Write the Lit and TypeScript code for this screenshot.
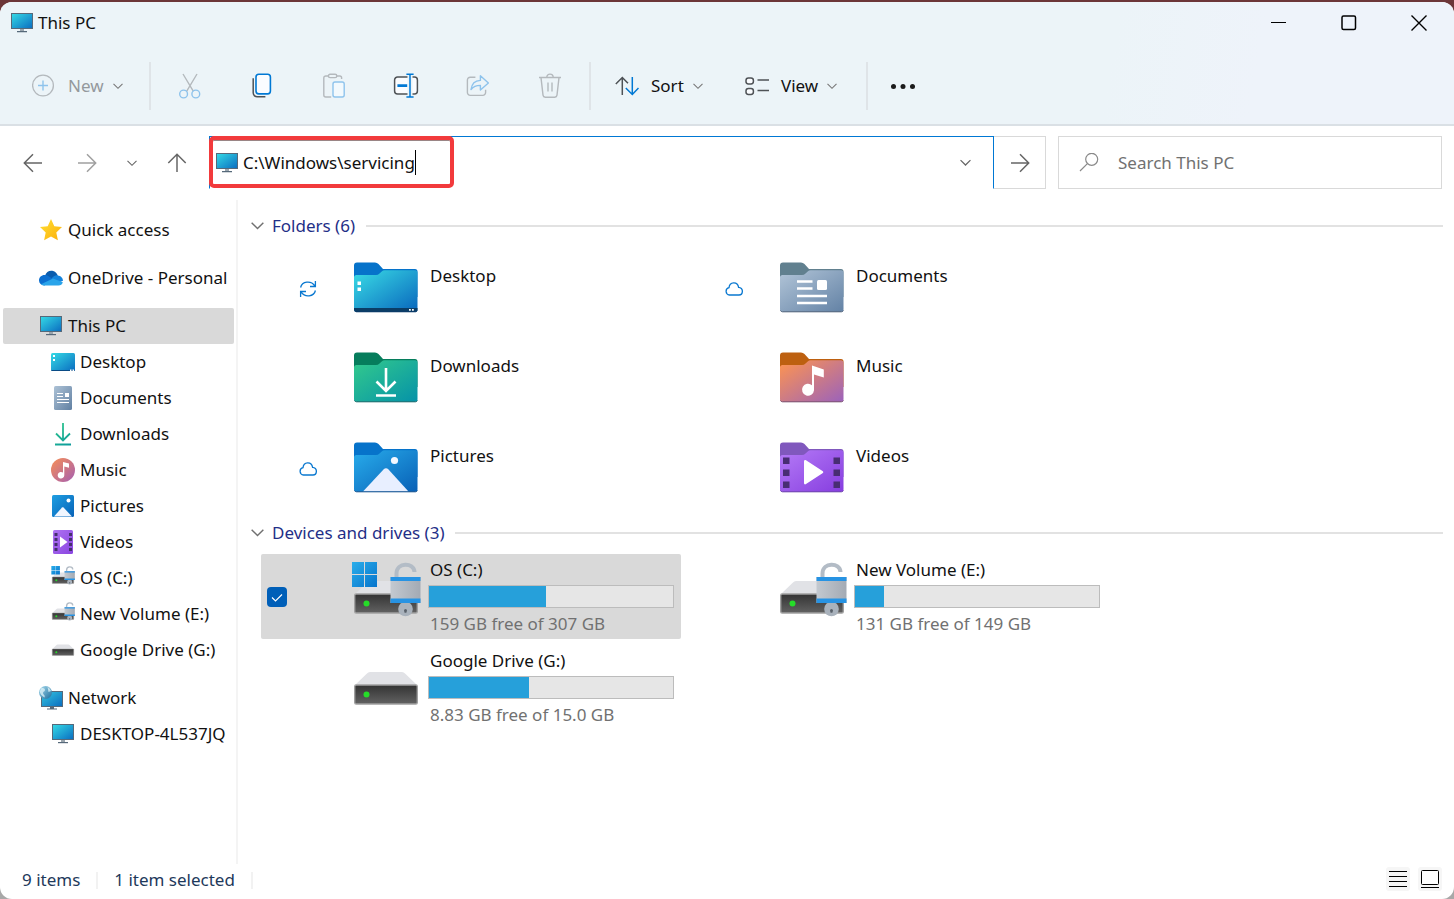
import { LitElement, html, css, svg, nothing, TemplateResult } from "lit";
import { customElement, property, state } from "lit/decorators.js";
import { classMap } from "lit/directives/class-map.js";

type Icon = TemplateResult;

const chevron = (w = 10) => html`<svg width=${w} height=${w} viewBox="0 0 10 10" fill="none" stroke="currentColor" stroke-width="1.1"><path d="M.5 2.8 5 7.3l4.5-4.5" /></svg>`;

/* ---- toolbar glyphs ---- */
const plusIcon = html`<svg width="24" height="24" viewBox="0 0 24 24" fill="none"><circle cx="11" cy="11.500" r="10.4" stroke="#b4b9bd" stroke-width="1.3" /><path d="M11 6.500v10M6 11.500h10" stroke="#8ec3ec" stroke-width="1.4" /></svg>`;
const cutIcon = html`<svg width="24" height="26" viewBox="0 0 24 26" fill="none" stroke-width="1.4"><path d="M5 1l10.4 17.4M19 1 8.6 18.4" stroke="#b4b9bd" /><circle cx="5.6" cy="21" r="3.9" stroke="#8ec3ec" /><circle cx="17.8" cy="21" r="3.9" stroke="#8ec3ec" /></svg>`;
const copyIcon = html`<svg width="24" height="26" viewBox="0 0 24 26" fill="none"><path d="M3.2 5.2v14.6a4 4 0 0 0 4 4h8.2" stroke="#4e5256" stroke-width="1.5" /><rect x="6" y="1.3" width="14.4" height="19.6" rx="2.8" stroke="#0078d4" stroke-width="1.6" fill="#fafcff" /></svg>`;
const pasteIcon = html`<svg width="24" height="26" viewBox="0 0 24 26" fill="none" stroke-width="1.4"><path d="M6.4 3H3.8a2 2 0 0 0-2 2v17a2 2 0 0 0 2 2h5.4M14.6 3h3.2a1.8 1.8 0 0 1 1.8 1.8V6" stroke="#b4b9bd" /><rect x="6.4" y="1.2" width="8.4" height="3.4" rx="1.7" stroke="#b4b9bd" /><rect x="11" y="9" width="11.2" height="15" rx="2" stroke="#8ec3ec" fill="#f2f9fd" /></svg>`;
const renameIcon = html`<svg width="26" height="26" viewBox="0 0 26 26" fill="none"><path d="M14.5 4H4.6a3 3 0 0 0-3 3v11a3 3 0 0 0 3 3h9.9M19.5 4h1.9a3 3 0 0 1 3 3v11a3 3 0 0 1-3 3h-1.9" stroke="#4e5256" stroke-width="1.5" fill="#fafcff" /><path d="M4.4 12.6h9.8" stroke="#0078d4" stroke-width="2.6" /><path d="M17 1.5v22M13.4 1.2h7.2M13.4 24h7.2" stroke="#0078d4" stroke-width="1.5" /></svg>`;
const shareIcon = html`<svg width="24" height="24" viewBox="0 0 24 24" fill="none" stroke-width="1.4" stroke-linejoin="round"><path d="M9.4 3.2H4.2a2.8 2.8 0 0 0-2.8 2.8v12.6a2.8 2.8 0 0 0 2.8 2.8h12.6a2.8 2.8 0 0 0 2.8-2.8v-2.8" stroke="#b4b9bd" /><path d="M14.4 1.8v4.6C9.2 6.6 5.8 9.2 5 15.6c2.400-3.200 5.200-4.200 9.400-4.200V16l8-7.100z" stroke="#8ec3ec" /></svg>`;
const trashIcon = html`<svg width="24" height="26" viewBox="0 0 24 26" fill="none" stroke="#b4b9bd" stroke-width="1.4"><path d="M1 4.500h22M8.800 4.300a3.200 3.200 0 0 1 6.400 0M3 4.700l2 17.500a2.300 2.300 0 0 0 2.300 2h9.400a2.300 2.300 0 0 0 2.300-2l2-17.500M10 9.500v9M14 9.500v9" /></svg>`;
const sortIcon = html`<svg width="24" height="20" viewBox="0 0 24 20" fill="none" stroke-width="1.500"><path d="M7.300 19V1.500M.8 8l6.500-6.500L13 7.300" stroke="#4e5256" /><path d="M17.300 1v17.500M10.800 12l6.500 6.500L23.500 12" stroke="#0078d4" /></svg>`;
const viewIcon = html`<svg width="24" height="20" viewBox="0 0 24 20" fill="#fafcff" stroke="#4e5256" stroke-width="1.500"><rect x="1" y="2" width="7.400" height="6" rx="2.400" /><rect x="1" y="12.500" width="7.400" height="6" rx="2.400" /><path d="M12.500 4H24M12.500 14.500H24" /></svg>`;
const moreIcon = html`<svg width="26" height="6" viewBox="0 0 26 6" fill="#1b1b1b"><circle cx="3.500" cy="3.500" r="2.500" /><circle cx="13" cy="3.500" r="2.500" /><circle cx="22.500" cy="3.500" r="2.500" /></svg>`;

/* ---- navigation glyphs ---- */
const arrow = (rotation: number) => html`<svg width="20" height="20" viewBox="0 0 20 20" fill="none" stroke="currentColor" stroke-width="1.500"><g transform="rotate(${rotation} 10 10)"><path d="M19 10H1.500M10 1.300 1.300 10l8.700 8.700" /></g></svg>`;
const searchIcon = html`<svg width="20" height="20" viewBox="0 0 20 20" fill="none" stroke="#8a8a8a" stroke-width="1.200"><circle cx="12.700" cy="6.300" r="6" /><path d="M8.400 10.600 1 18" /></svg>`;

/* ---- shared colour ramps ---- */
const ramp = (id: string, from: string, to: string) => svg`<linearGradient id=${id} x1="0" y1="0" x2="1" y2="1"><stop offset="0" stop-color=${from} /><stop offset="1" stop-color=${to} /></linearGradient>`;

/* ---- places ---- */
const pcIcon = html`<svg width="24" height="24" viewBox="0 0 24 24"><defs>${ramp("pc", "#35dbe6", "#0a6cc0")}</defs><rect x="1.500" y="2.500" width="21" height="15" fill="url(#pc)" stroke="#56697a" /><path d="M10 18h4v2h-4z" fill="#9aa5ae" /><path d="M7 20h10v1.200H7z" fill="#56697a" /></svg>`;
const starIcon = html`<svg width="24" height="24" viewBox="0 0 24 24"><defs>${ramp("st", "#ffe034", "#fcae0a")}</defs><path d="m12 1 3.300 7.200 7.700.9-5.700 5.300 1.600 7.900-6.900-3.900-6.900 3.900 1.600-7.900L1 9.100l7.700-.9z" fill="url(#st)" /></svg>`;
const oneDriveIcon = html`<svg width="24" height="24" viewBox="0 0 24 24"><path d="M6 10c1-4.500 5-6 8.200-5 2.600.8 4 2.700 4.600 5L12 15z" fill="#0a5cad" /><path d="M5.500 19.500A5.200 5.200 0 0 1 0 14.200C0 11 3 8.500 6.200 9c2.300.2 4 1.600 8 4z" fill="#0c6fd0" /><path d="M12.500 12.500c2.500-3 4.500-3.400 6.300-3 3 .3 5.200 2.600 5.200 5.300l-5 2z" fill="#1483dc" /><path d="M2 18.200 14 12.600l9.800 3.600a4.600 4.600 0 0 1-4.300 3.300H5.500A5 5 0 0 1 2 18.200z" fill="#2aa4ea" /></svg>`;
const desktopIcon = html`<svg width="24" height="24" viewBox="0 0 24 24"><defs>${ramp("dt", "#35dbe6", "#0a6cc0")}</defs><rect y="3" width="24" height="18" rx="1.500" fill="url(#dt)" /><path d="M0 20h24a1.500 1.500 0 0 1-1.500 1H1.500A1.500 1.500 0 0 1 0 20z" fill="#0a4b85" /><path d="M2 5h2v2H2zM2 9h2v2H2zM19 19.500h1.500V21H19zM21.500 19.500H23V21h-1.500z" fill="#fff" /></svg>`;
const documentIcon = html`<svg width="24" height="24" viewBox="0 0 24 24"><defs>${ramp("dc", "#adc2d6", "#6180a2")}</defs><rect x="3" width="18" height="24" rx="1.500" fill="url(#dc)" /><path d="M6 7.500h6M6 10.500h6M6 13.500h12M6 16.500h12" stroke="#fff" stroke-width="1.200" /><path d="M14 7h4v4h-4z" fill="#fff" /></svg>`;
const downloadIcon = html`<svg width="24" height="24" viewBox="0 0 24 24" fill="none"><defs><linearGradient id="dl" gradientUnits="userSpaceOnUse" x1="4" y1="1" x2="20" y2="23"><stop stop-color="#32c98c" /><stop offset="1" stop-color="#0b9a9c" /></linearGradient></defs><path d="M12 1v17M5 11.500l7 7 7-7M4 22.500h16" stroke="url(#dl)" stroke-width="1.800" /></svg>`;
const note = svg`<path d="M12 4v10.600a3.300 3.300 0 1 0 1.300 2.700V8.500l4.700 1.200V5.500z" fill="#fff" />`;
const musicIcon = html`<svg width="24" height="24" viewBox="0 0 24 24"><defs>${ramp("mu", "#f88f55", "#a55fb2")}</defs><circle cx="12" cy="12" r="12" fill="url(#mu)" />${note}</svg>`;
const pictureIcon = html`<svg width="24" height="24" viewBox="0 0 24 24"><defs>${ramp("pi", "#1f9fe2", "#0762b7")}</defs><rect x="1" y="1" width="22" height="22" rx="1.500" fill="url(#pi)" /><path d="m3 22.500 8-9c.5-.5 1-.5 1.500 0l8.500 9z" fill="#f1f6ff" /><circle cx="17.500" cy="6.500" r="2" fill="#fff" /></svg>`;
const videoIcon = html`<svg width="24" height="24" viewBox="0 0 24 24"><defs>${ramp("vi", "#ae72f2", "#8a45e0")}</defs><rect x="2" width="20" height="24" rx="1.500" fill="url(#vi)" /><path d="M3.500 3h3v3h-3zM3.500 8h3v3h-3zM3.500 13h3v3h-3zM3.500 18h3v3h-3zM18 3h3v3h-3zM18 8h3v3h-3zM18 13h3v3h-3zM18 18h3v3h-3z" fill="#45306e" /><path d="M9 6.500v11l7.500-5.500z" fill="#fff" /></svg>`;
const networkIcon = html`<svg width="24" height="24" viewBox="0 0 24 24"><defs>${ramp("nw", "#35c8e0", "#0a6cc0")}${ramp("gl", "#a8dcef", "#1c6c9c")}</defs><rect x="2.500" y="5.500" width="21" height="15" fill="url(#nw)" stroke="#56697a" /><path d="M11 21h4v1.500h-4zM8 22.500h10v1H8z" fill="#56697a" /><circle cx="6.500" cy="6.500" r="6.500" fill="url(#gl)" /><path d="M2 2.500c2-1 4 0 4 1.500s-2 1.500-2 3 2.500 2 1.500 4.500C3 10 1 8 .8 5.500zM8.500 1c2 .8 3 2.500 3.500 4L9.500 6z" fill="#e4f5f9" opacity=".75" /></svg>`;

/* ---- drives, drawn in a 70 x 60 box ---- */
const flag = svg`<path d="M1 2h12v12H1zM14 2h12v12H14zM1 15h12v12H1zM14 15h12v12H14z" fill="url(#fl)" />`;
const padlock = svg`<path d="M45.500 19V13.500c0-11.500 17.500-11.500 18-1.500" fill="none" stroke="#b3bcc6" stroke-width="4" /><circle cx="54.500" cy="49" r="7.300" fill="#a9b2bc" /><path d="M39.500 17h30v26h-30z" fill="url(#lk)" /><path d="M39.500 17h30v4h-30zM39.500 38.500h30v4.500h-30z" fill="#2793e3" /><path d="M53 50.500a1.500 1.500 0 0 1 3 0l-.6 2.200h-1.800z" fill="#59616a" />`;
const drive = (size: "small" | "large", withFlag: boolean, withLock: boolean): Icon => html`<svg class="art-drive" width=${size === "large" ? 70 : 24} height=${size === "large" ? 60 : 24} viewBox=${size === "large" ? "0 0 70 60" : "0 2 70 70"}>
  <defs>
    ${ramp("fl", "#2aaeea", "#0774cc")}
    <linearGradient id="lk"><stop stop-color="#c3c9d0" /><stop offset="1" stop-color="#a3aab4" /></linearGradient>
    <linearGradient id="dv" x2="0" y2="1"><stop stop-color="#333" /><stop offset="1" stop-color="#626262" /></linearGradient>
  </defs>
  <path d="M4 34 16 22.500a4 4 0 0 1 3-1.500h32a4 4 0 0 1 3 1.500L66 34z" fill="#e1e2e6" />
  <rect x="3.700" y="34" width="62.600" height="19" rx="1.500" fill="url(#dv)" stroke="#a0a0a0" stroke-width="1.400" />
  <circle cx="15.500" cy="43.500" r="3" fill="#25dc28" />
  ${withFlag ? flag : nothing}${withLock ? padlock : nothing}
</svg>`;

/* ---- folders, drawn in a 70 x 60 box ---- */
const folder = (id: string, tab: string, edge: string, from: string, to: string, art: unknown): Icon => html`<svg width="70" height="60" viewBox="0 0 70 60">
  <defs>${ramp(id, from, to)}</defs>
  <path d="M3 8.500A3 3 0 0 1 6 5.500h18q2 0 3.500 1.500l4.500 5h32a2.500 2.500 0 0 1 2.500 2.500V40H3z" fill=${tab} />
  <path d="M3 20.500a2.500 2.500 0 0 1 2.500-2.500H25q2 0 3.500-1.500l2.500-2.300q1-.9 2.500-.9h30.500a2.500 2.500 0 0 1 2.500 2.500v36.500a2.500 2.500 0 0 1-2.500 2.500H5.500A2.500 2.500 0 0 1 3 52.300z" fill="url(#${id})" />
  ${art}
  <path d="M3.500 53.500q.8 1.300 2 1.300h59q1.200 0 2-1.300" fill="none" stroke=${edge} stroke-width=".9" />
</svg>`;
const folderIcons: Record<string, Icon> = {
  Desktop: folder("fD", "#0673ca", "#0c3c6b", "#3adce5", "#0866bd", svg`<path d="M3 51h63.500v1.800a2.500 2.500 0 0 1-2.500 2.300H5.500A2.500 2.500 0 0 1 3 52.800z" fill="#0b3d66" /><path d="M6.500 24.500H10V28H6.500zM6.500 30.500H10V34H6.500zM58 52h1.800v1.800H58zM61 52h1.800v1.800H61z" fill="#fff" />`),
  Downloads: folder("fL", "#067d5c", "#07595c", "#33ca8c", "#0592a8", svg`<path d="M35 21v22.500M25.500 34.500l9.500 9.500 9.500-9.500M25 48.500h20" fill="none" stroke="#fff" stroke-width="2.600" />`),
  Pictures: folder("fP", "#0673ca", "#074584", "#28aceb", "#0860b6", svg`<path d="m12 54.600 20.500-22q2.500-2.600 5 0L57.500 54.600z" fill="#e8efff" /><circle cx="43.500" cy="23.500" r="3.600" fill="#f4f8ff" />`),
  Documents: folder("fC", "#61808f", "#41536d", "#b2c5d8", "#6382a5", svg`<path d="M20 24.500h15.500M20 31.500h15.500M20 39h30M20 46h30" stroke="#fff" stroke-width="2.600" /><rect x="40" y="23" width="10" height="10" rx="1.500" fill="#fff" />`),
  Music: folder("fM", "#bd6010", "#6b3d60", "#ff954f", "#9b62bb", svg`<path d="M35 18.500v19.800a6 6 0 1 0 2 5V27.500l9.800 3v-8z" fill="#fff" />`),
  Videos: folder("fV", "#8058bd", "#5b2ca0", "#b57bf7", "#863ddf", svg`<path d="M6 20.500h6.500V27H6zM6 32.500h6.500V39H6zM6 44.500h6.500V51H6zM56.500 20.500H63V27h-6.500zM56.500 32.500H63V39h-6.500zM56.500 44.500H63V51h-6.500z" fill="#482d73" /><path d="M27 24.500c0-1.500 1-2 2-1.200L45.500 34c1 .8 1 1.500 0 2.300L29 47c-1 .8-2 .3-2-1z" fill="#fff" />`),
};

const syncIcon = html`<svg width="18" height="18" viewBox="0 0 18 18" fill="none" stroke="#0a78d0" stroke-width="1.300"><path d="M1.600 7.500C3 1.200 12 .2 15.800 5.800M16.400 1v5.500H11M16.400 10.500C15 16.800 6 17.800 2.200 12.200M1.600 17v-5.500H7" /></svg>`;
const cloudIcon = html`<svg width="18" height="18" viewBox="0 0 18 18" fill="none" stroke="#0a78d0" stroke-width="1.300"><path d="M4.500 15A3.700 3.700 0 0 1 4 7.700C4.500 1.500 12.500 1 13.600 7.300 18.800 7.800 18.300 15 14 15z" /></svg>`;

interface Place { label: string; icon: Icon; child?: boolean; gap?: boolean }
const places: Place[] = [
  { label: "Quick access", icon: starIcon },
  { label: "OneDrive - Personal", icon: oneDriveIcon, gap: true },
  { label: "This PC", icon: pcIcon, gap: true },
  { label: "Desktop", icon: desktopIcon, child: true },
  { label: "Documents", icon: documentIcon, child: true },
  { label: "Downloads", icon: downloadIcon, child: true },
  { label: "Music", icon: musicIcon, child: true },
  { label: "Pictures", icon: pictureIcon, child: true },
  { label: "Videos", icon: videoIcon, child: true },
  { label: "OS (C:)", icon: drive("small", true, true), child: true },
  { label: "New Volume (E:)", icon: drive("small", false, true), child: true },
  { label: "Google Drive (G:)", icon: drive("small", false, false), child: true },
  { label: "Network", icon: networkIcon, gap: true },
  { label: "DESKTOP-4L537JQ", icon: pcIcon, child: true },
];

const folders: { name: string; status?: Icon }[] = [
  { name: "Desktop", status: syncIcon },
  { name: "Documents", status: cloudIcon },
  { name: "Downloads" },
  { name: "Music" },
  { name: "Pictures", status: cloudIcon },
  { name: "Videos" },
];

const drives = [
  { name: "OS (C:)", icon: drive("large", true, true), used: 48, free: "159 GB free of 307 GB" },
  { name: "New Volume (E:)", icon: drive("large", false, true), used: 12, free: "131 GB free of 149 GB" },
  { name: "Google Drive (G:)", icon: drive("large", false, false), used: 41, free: "8.83 GB free of 15.0 GB" },
];

const base = css`
  * { box-sizing: border-box; }
  button, input { font: inherit; color: inherit; border: 0; background: none; margin: 0; padding: 0; outline: none; }
  svg { display: block; flex: none; }
`;

@customElement("item-group")
export class ItemGroup extends LitElement {
  @property() heading = "";
  @state() private open = true;

  static styles = [base, css`
    :host { display: block; }
    .head { display: flex; align-items: center; gap: 8px; width: 100%; height: 43px; padding-left: 14px; color: #1f2f87; text-align: left; }
    .head svg { color: #707070; }
    .rule { flex: 1; height: 2px; margin-left: 3px; background: #e2e2e2; }
    .items { display: grid; grid-template-columns: repeat(auto-fill, 420px); gap: 6px; padding-left: 24px; }
  `];

  render() {
    return html`
      <button class="head" aria-expanded=${this.open} @click=${() => (this.open = !this.open)}>
        ${chevron(13)}<span>${this.heading}</span><span class="rule"></span>
      </button>
      ${this.open ? html`<div class="items"><slot></slot></div>` : nothing}
    `;
  }
}

@customElement("app-root")
export class AppRoot extends LitElement {
  @state() private place = "This PC";
  @state() private picked = "OS (C:)";

  static styles = [base, css`
    :host { display: block; box-sizing: border-box; height: 100vh; min-height: 560px; padding-top: 2px; background: linear-gradient(#6c3638 0 50%, #a8a8a8 50%); font: 17px/24px "Noto Sans", "Open Sans", sans-serif; color: #111; }
    .window { display: flex; flex-direction: column; height: 100%; background: #fff; border-radius: 12px; overflow: hidden; }

    .top { background: linear-gradient(100deg, #ecf4f8 76%, #eef3fa 86%); border-bottom: 2px solid #dae0e5; }
    .titlebar { display: flex; align-items: center; height: 42px; padding-left: 10px; }
    .title { flex: 1; display: flex; align-items: center; gap: 4px; font-size: 17px; font-weight: 400; margin: 0; }
    .caption { display: flex; }
    .caption button { display: grid; place-items: center; width: 70px; height: 42px; }

    .toolbar { display: flex; align-items: center; height: 80px; padding: 4px 20px 0; }
    .tool { display: flex; align-items: center; gap: 12px; height: 48px; padding: 0 12px; width: 130px; }
    .tool .label { display: flex; align-items: center; gap: 9px; }
    .tool .label svg { color: #777; }
    .tool.new { width: 126px; }
    .tool:disabled { color: #94999d; }
    .glyph { display: grid; place-items: center; width: 72px; height: 48px; }
    .glyph.more { width: 64px; }
    .split { width: 2px; height: 48px; margin: 0 3px; background: #dfe4e8; }
    .menus { display: flex; padding-left: 9px; }

    .navbar { display: flex; align-items: center; padding: 10px 12px 11px 23px; color: #666; }
    .moves { display: flex; align-items: center; width: 186px; gap: 30px; }
    .moves button { display: grid; place-items: center; }
    .moves .dim { margin-left: 4px; color: #a0a0a0; }
    .address { position: relative; flex: 1; display: flex; align-items: center; height: 53px; padding: 0 22px 0 5px; border: 1px solid #0078d4; border-bottom-color: transparent; color: #111; min-width: 0; }
    .address label { display: flex; align-items: center; padding-right: 4px; }
    .address input { field-sizing: content; height: 24px; }
    .caret { width: 1px; height: 25px; background: #000; }
    .history { margin-left: auto; color: #666; }
    .marker { position: absolute; top: -1px; left: -1px; width: 245px; height: 52px; border: 4px solid #f23a3c; border-radius: 5px; box-shadow: inset 0 1px 0 #9a8585; pointer-events: none; }
    .go { display: grid; place-items: center; width: 52px; height: 53px; border: 1px solid #d9d9d9; border-left: 0; }
    .search { flex: 0 1 384px; display: flex; align-items: center; gap: 19px; height: 53px; margin-left: 12px; padding: 0 20px; border: 1px solid #d9d9d9; min-width: 0; }
    .search input { flex: 1; min-width: 0; }
    .search input::placeholder { color: #717171; opacity: 1; }

    .body { flex: 1; display: flex; min-height: 0; }
    .places { flex: none; width: 238px; padding: 12px 2px 0 3px; border-right: 2px solid #f4f4f4; }
    .place { display: flex; align-items: center; gap: 5px; height: 36px; width: 231px; padding-left: 36px; border-radius: 2px; color: inherit; text-decoration: none; white-space: nowrap; }
    .place.child { padding-left: 48px; }
    .place.gap { margin-top: 12px; }
    .place.current { background: #d9d9d9; }
    .content { flex: 1; min-width: 0; padding: 4px 11px 0 0; overflow: hidden; margin-left: -1px; }

    .tile { display: grid; grid-template-columns: 20px 18px 70px 1fr; column-gap: 12px; align-items: center; height: 84px; padding: 0 7px 0 6px; border-radius: 2px; }
    .tile.drive { height: 85px; }
    .tile .art { align-self: start; margin: 10px 0 0 22px; }
    .tile.drive .art { margin-top: 6px; }
    .tile .text { margin-left: 17px; }
    .tile .name { display: block; padding-left: 2px; }
    .tile.folder .name { margin-bottom: 26px; }
    .tile.selected { background: #d9d9d9; }
    .check { appearance: none; width: 20px; height: 20px; border-radius: 4px; opacity: 0; }
    .check:checked { opacity: 1; background: #005fb8 url("data:image/svg+xml,%3Csvg xmlns='http://www.w3.org/2000/svg' viewBox='0 0 20 20' fill='none' stroke='white' stroke-width='1.100'%3E%3Cpath d='M5 10.500l3.500 3.500L15 7.500'/%3E%3C/svg%3E"); }
    .bar { height: 23px; margin: 3px 0 4px; border: 1px solid #bcbcbc; background: #e6e6e6; }
    .fill { height: 100%; background: #26a0da; }
    .free { display: block; padding-left: 2px; color: #717171; }

    .status-bar { display: flex; align-items: center; height: 35px; padding: 0 12px 3px 22px; color: #1e395b; }
    .tick { width: 2px; height: 17px; margin: 0 16px; background: #f2f2f2; }
    .views { display: flex; gap: 8px; margin-left: auto; padding-bottom: 3px; }
    .views button { display: grid; place-items: center; width: 24px; height: 24px; border-radius: 3px; background: #f6f6f6; }
  `];

  private pick(name: string) {
    this.picked = this.picked === name ? "" : name;
  }

  private renderTile(name: string, kind: "folder" | "drive", icon: Icon, status: unknown, details: unknown) {
    const selected = this.picked === name;
    return html`<div class=${classMap({ tile: true, [kind]: true, selected })}>
      <input class="check" type="checkbox" aria-label="Select ${name}" .checked=${selected} @change=${() => this.pick(name)} />
      <span class="status">${status}</span>
      <span class="art">${icon}</span>
      <div class="text"><span class="name">${name}</span>${details}</div>
    </div>`;
  }

  render() {
    return html`<div class="window">
      <header class="top">
        <div class="titlebar">
          <h1 class="title">${pcIcon}<span>This PC</span></h1>
          <div class="caption">
            <button aria-label="Minimize"><svg width="16" height="16" stroke="#000"><path d="M0 7.500h15" /></svg></button>
            <button aria-label="Maximize"><svg width="16" height="16" fill="none" stroke="#000" stroke-width="1.500"><rect x="1" y="1" width="13.500" height="13.500" rx="1.500" /></svg></button>
            <button aria-label="Close"><svg width="16" height="16" stroke="#000" stroke-width="1.400"><path d="m.5.5 15 15M15.500.5l-15 15" /></svg></button>
          </div>
        </div>
        <div class="toolbar" role="toolbar">
          <button class="tool new" disabled>${plusIcon}<span class="label">New ${chevron()}</span></button>
          <span class="split"></span>
          <button class="glyph" aria-label="Cut" disabled>${cutIcon}</button>
          <button class="glyph" aria-label="Copy">${copyIcon}</button>
          <button class="glyph" aria-label="Paste" disabled>${pasteIcon}</button>
          <button class="glyph" aria-label="Rename">${renameIcon}</button>
          <button class="glyph" aria-label="Share" disabled>${shareIcon}</button>
          <button class="glyph" aria-label="Delete" disabled>${trashIcon}</button>
          <span class="split"></span>
          <div class="menus">
            <button class="tool">${sortIcon}<span class="label">Sort ${chevron()}</span></button>
            <button class="tool">${viewIcon}<span class="label">View ${chevron()}</span></button>
          </div>
          <span class="split"></span>
          <button class="glyph more" aria-label="See more">${moreIcon}</button>
        </div>
      </header>

      <div class="navbar">
        <div class="moves">
          <button aria-label="Back">${arrow(0)}</button>
          <button class="dim" aria-label="Forward">${arrow(180)}</button>
          <button aria-label="Recent locations">${chevron()}</button>
          <button aria-label="Up">${arrow(90)}</button>
        </div>
        <div class="address">
          <label for="path" aria-label="Address">${pcIcon}</label>
          <input id="path" type="text" value=${"C:\\Windows\\servicing"} spellcheck="false" />
          <span class="caret"></span>
          <button class="history" aria-label="Previous locations">${chevron(11)}</button>
          <span class="marker"></span>
        </div>
        <button class="go" aria-label="Go">${arrow(180)}</button>
        <div class="search">
          <label for="query" aria-label="Search">${searchIcon}</label>
          <input id="query" type="text" placeholder="Search This PC" />
        </div>
      </div>

      <div class="body">
        <nav class="places" aria-label="Places">
          ${places.map((p) => html`<a href="#"
            class=${classMap({ place: true, child: !!p.child, gap: !!p.gap, current: p.label === this.place })}
            @click=${(e: Event) => { e.preventDefault(); this.place = p.label; }}>${p.icon}<span>${p.label}</span></a>`)}
        </nav>
        <main class="content">
          <item-group heading="Folders (6)">
            ${folders.map((f) => this.renderTile(f.name, "folder", folderIcons[f.name], f.status ?? nothing, nothing))}
          </item-group>
          <item-group heading="Devices and drives (3)">
            ${drives.map((d) => this.renderTile(d.name, "drive", d.icon, nothing, html`
              <div class="bar" role="meter" aria-label="${d.name} space used" aria-valuenow=${d.used} aria-valuemin="0" aria-valuemax="100"><div class="fill" style="width:${d.used}%"></div></div>
              <span class="free">${d.free}</span>`))}
          </item-group>
        </main>
      </div>

      <footer class="status-bar">
        <span>9 items</span><span class="tick"></span><span>1 item selected</span><span class="tick"></span>
        <div class="views">
          <button aria-label="Details view"><svg width="18" height="18" stroke="#000" stroke-width="1"><path d="M0 1.500h18M0 6.500h18M0 11.500h18M0 16.500h18" /></svg></button>
          <button aria-label="Large icons view"><svg width="18" height="18" fill="#fff" stroke="#000"><rect x=".5" y=".5" width="17" height="14" rx="1" /><path d="M0 17.500h18" /></svg></button>
        </div>
      </footer>
    </div>`;
  }
}
